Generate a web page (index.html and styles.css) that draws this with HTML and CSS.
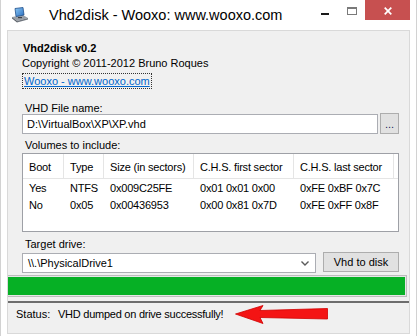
FILE: index.html
```html
<!DOCTYPE html>
<html lang="en">
<head>
    <meta charset="UTF-8">
    <meta name="viewport" content="width=device-width, initial-scale=1.0">
    <title>Vhd2disk - Wooxo: www.wooxo.com</title>
    <link rel="stylesheet" href="styles.css">
</head>
<body>
    <div class="window">
        <header class="titlebar">
            <svg class="app-icon" width="16" height="16" viewBox="0 0 16 16">
                <defs>
                    <linearGradient id="scr" x1="0" y1="0" x2="1" y2="1">
                        <stop offset="0" stop-color="#8cc8f5"/>
                        <stop offset="1" stop-color="#2a6fc0"/>
                    </linearGradient>
                </defs>
                <polygon points="0,10 11,8 16,11 5,14" fill="#9aa0a8"/>
                <polygon points="0,10 5,14 5,15.5 0,11.5" fill="#5c6168"/>
                <polygon points="5,14 16,11 16,12.5 5,15.5" fill="#70767e"/>
                <polygon points="3,1.5 11,0.5 12,8 4,9.5" fill="url(#scr)" stroke="#1f4f8a" stroke-width="0.8"/>
                <rect x="6" y="10" width="4" height="1.2" fill="#3b3f45"/>
            </svg>
            <span class="title">Vhd2disk - Wooxo: www.wooxo.com</span>
            <div class="controls">
                <span class="ctl min"><i></i></span>
                <span class="ctl max"><i></i></span>
                <span class="ctl close">
                    <svg width="8" height="8" viewBox="0 0 8 8">
                        <path d="M0.7 0.7 L7.3 7.3 M7.3 0.7 L0.7 7.3" stroke="#fff" stroke-width="1.7"/>
                    </svg>
                </span>
            </div>
        </header>

        <main class="client">
            <section class="content">
                <h1>Vhd2disk v0.2</h1>
                <p class="copy">Copyright © 2011-2012 Bruno Roques</p>
                <a class="link" href="#">Wooxo - www.wooxo.com</a>

                <label class="label first">VHD File name:</label>
                <div class="row">
                    <div class="field">D:\VirtualBox\XP\XP.vhd</div>
                    <button class="btn browse">...</button>
                </div>

                <label class="label">Volumes to include:</label>
                <div class="list">
                    <div class="cols head">
                        <span>Boot</span>
                        <span>Type</span>
                        <span>Size (in sectors)</span>
                        <span>C.H.S. first sector</span>
                        <span>C.H.S. last sector</span>
                    </div>
                    <div class="rows">
                        <div class="cols">
                            <span>Yes</span>
                            <span>NTFS</span>
                            <span>0x009C25FE</span>
                            <span>0x01 0x01 0x00</span>
                            <span>0xFE 0xBF 0x7C</span>
                        </div>
                        <div class="cols">
                            <span>No</span>
                            <span>0x05</span>
                            <span>0x00436953</span>
                            <span>0x00 0x81 0x7D</span>
                            <span>0xFE 0xFF 0x8F</span>
                        </div>
                    </div>
                </div>

                <label class="label target">Target drive:</label>
                <div class="row drive-row">
                    <div class="combo">
                        <span>\\.\PhysicalDrive1</span>
                        <svg width="8" height="5" viewBox="0 0 8 5">
                            <path d="M0.5 0.5 L4 4 L7.5 0.5" fill="none" stroke="#5a5a5a" stroke-width="1.4"/>
                        </svg>
                    </div>
                    <button class="btn dump">Vhd to disk</button>
                </div>
            </section>

            <div class="progress"><div class="fill"></div></div>

            <footer class="status">
                <span class="status-label">Status:</span>
                <span class="status-text">VHD dumped on drive successfully!</span>
                <svg class="arrow" width="93" height="19" viewBox="0 0 93 19">
                    <polygon points="0.5,9 28,0.5 25,5.5 92.5,3.5 92.5,14 25,12.5 28,18.5" fill="#f41414" stroke="#d00000" stroke-width="0.8" stroke-linejoin="round"/>
                </svg>
            </footer>
        </main>
    </div>
</body>
</html>
```

FILE: styles.css
```css
body {
    margin: 0;
    padding: 0;
    background: #fff;
    font-family: "Liberation Sans", Arial, sans-serif;
    font-size: 11px;
    color: #000;
}

.window {
    width: 417px;
    height: 336px;
    box-sizing: border-box;
    background: #fff;
    border-left: 1px solid #d2d2d2;
    border-right: 1px solid #d2d2d2;
    padding: 0 6px;
    overflow: hidden;
}

/* title bar */
.titlebar {
    display: flex;
    align-items: flex-start;
    height: 30px;
}

.app-icon {
    margin: 7px 0 0 5px;
    flex-shrink: 0;
}

.title {
    margin-left: 21px;
    font-size: 14.5px;
    line-height: 30px;
    color: #000;
    white-space: nowrap;
}

.controls {
    display: flex;
    margin-left: auto;

    .ctl {
        display: flex;
        justify-content: center;
        align-items: flex-start;
        height: 20px;
    }

    .min {
        width: 26px;
        i {
            width: 8px;
            height: 2px;
            margin-top: 13px;
            background: #1a1a1a;
        }
    }

    .max {
        width: 27px;
        i {
            width: 8px;
            height: 5px;
            margin-top: 7px;
            border: 1px solid #7a7a7a;
            border-top-width: 2px;
        }
    }

    .close {
        width: 45px;
        background: #c75050;
        svg {
            margin-top: 7px;
        }
    }
}

/* client area */
.client {
    display: flex;
    flex-direction: column;
    height: 304px;
    box-sizing: border-box;
    background: #f0f0f0;
    border: 1px solid #d9d9d9;
}

.content {
    padding: 10px 10px 0 14px;
}

h1 {
    margin: 0 0 0 1px;
    font-size: 11px;
    line-height: 15px;
    font-weight: bold;
}

.copy {
    margin: 0;
    line-height: 15px;
}

.link {
    display: block;
    width: fit-content;
    margin-top: 2px;
    padding: 0 1px;
    line-height: 14px;
    border: 1px dotted #333;
    color: #0066cc;
    text-decoration: underline;
}

.label {
    display: block;
    margin: 5px 0 0 3px;
    line-height: 12px;

    &.first {
        margin-top: 13px;
    }

    &.target {
        margin-top: 6px;
    }
}

.row {
    display: flex;
    align-items: flex-start;
}

.field {
    width: 356px;
    height: 20px;
    box-sizing: border-box;
    border: 1px solid #abadb3;
    background: #fff;
    padding-left: 4px;
    line-height: 18px;
}

.btn {
    box-sizing: border-box;
    border: 1px solid #adadad;
    background: #e1e1e1;
    font-family: inherit;
    font-size: 11px;
    color: #000;
    padding: 0;
    line-height: 18px;
}

.browse {
    width: 19px;
    height: 21px;
    margin: -1px 0 0 2px;
    color: #1a1a60;
}

.list {
    height: 79px;
    box-sizing: border-box;
    margin-top: 2px;
    border: 1px solid #9ea0a6;
    background: #fff;
}

.cols {
    display: grid;
    grid-template-columns: 41px 40px 90px 100px 100px;

    span {
        padding-left: 6px;
        white-space: nowrap;
        letter-spacing: -0.2px;
    }
}

.head {
    border-bottom: 1px solid #e5e5e5;

    span {
        height: 24px;
        box-sizing: border-box;
        padding-top: 2px;
        line-height: 22px;
        border-right: 1px solid #e5e5e5;
    }
}

.rows {
    padding-top: 1px;

    span {
        line-height: 17px;
    }
}

.drive-row {
    margin-top: 2px;
}

.combo {
    display: flex;
    align-items: center;
    justify-content: space-between;
    width: 294px;
    height: 20px;
    box-sizing: border-box;
    margin-top: 1px;
    border: 1px solid #abadb3;
    background: #fff;
    padding: 0 6px 0 5px;
    line-height: 18px;

    svg {
        margin-top: 1px;
    }
}

.dump {
    width: 76px;
    height: 20px;
    margin-left: 7px;
}

/* progress and status */
.progress {
    height: 22px;
    box-sizing: border-box;
    margin: 2px 2px 4px 0;
    border: 1px solid #bcbcbc;
    border-left: 0;
    padding: 1px 1px 1px 0;
    background: #e6e6e6;

    .fill {
        height: 100%;
        background: #06b025;
    }
}

.status {
    flex: 1;
    display: flex;
    align-items: flex-start;
    border-top: 2px solid #6d6d6d;
    padding-left: 8px;
    white-space: nowrap;

    .status-label,
    .status-text {
        margin-top: 5px;
        line-height: 12px;
    }

    .status-label {
        width: 42px;
    }

    .status-text {
        width: 177px;
        letter-spacing: -0.25px;
    }

    .arrow {
        margin-top: 2px;
    }
}
```
